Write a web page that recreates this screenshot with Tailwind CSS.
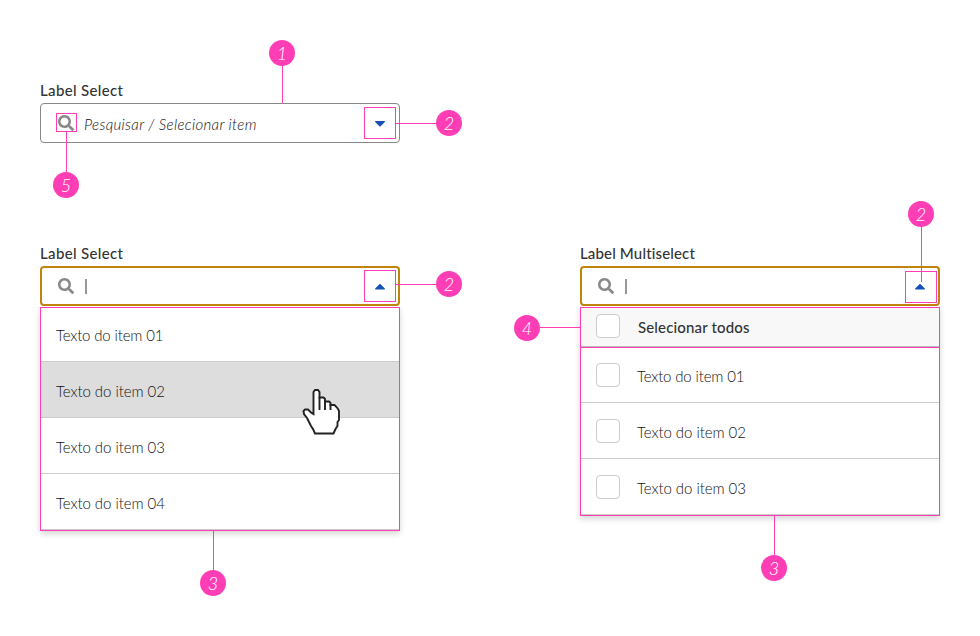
<!DOCTYPE html>
<html lang="pt-BR">
<head>
<meta charset="utf-8">
<title>Select</title>
<script src="https://cdn.jsdelivr.net/npm/@tailwindcss/browser@4"></script>
</head>
<body class="relative h-[636px] w-[980px] overflow-hidden bg-white font-[Lato,sans-serif] text-[#333]">
<svg class="hidden">
  <symbol id="search" viewBox="0 0 512 512"><path fill="#888" d="M505 442.700L405.300 343c-4.500-4.500-10.600-7-17-7H372c27.600-35.300 44-79.700 44-128C416 93.100 322.900 0 208 0S0 93.100 0 208s93.100 208 208 208c48.300 0 92.700-16.400 128-44v16.300c0 6.400 2.500 12.500 7 17l99.700 99.700c9.400 9.400 24.600 9.400 33.900 0l28.300-28.300c9.400-9.400 9.400-24.600.1-34zM208 336c-70.700 0-128-57.200-128-128 0-70.700 57.200-128 128-128 70.700 0 128 57.200 128 128 0 70.700-57.200 128-128 128z"/></symbol>
  <symbol id="down" viewBox="0 0 10 6"><path fill="#1351b4" d="M.6 0h8.800c.6 0 .8.600.4 1L5.600 5.200c-.3.400-.9.400-1.200 0L.2 1C-.2.600 0 0 .6 0z"/></symbol>
  <symbol id="up" viewBox="0 0 10 6"><path fill="#1351b4" d="M.6 5.500h8.800c.6 0 .8-.6.400-1L5.600.3c-.3-.4-.9-.4-1.200 0L.2 4.500c-.4.400-.2 1 .4 1z"/></symbol>
</svg>

<main class="flex justify-between px-10 pt-20">
  <section class="w-[360px]">
    <div class="h-[23px] text-[15px] leading-5 font-medium"><span class="tracking-[0.35px]">Label Select</span></div>
    <div class="flex h-10 items-center rounded-[4px] border border-[#888] pr-[3px] pl-[15px]">
      <div class="mb-px flex h-[19px] w-[21px] items-center border border-[#ff3eb5] pl-px"><svg class="h-4 w-4"><use href="#search"/></svg></div>
      <span class="mt-[3px] ml-[7px] flex-1 text-[15px] font-light italic tracking-[0.35px] text-[#111]">Pesquisar / Selecionar item</span>
      <div class="flex h-8 w-8 items-center justify-center border border-[#ff3eb5] pt-px"><svg class="h-[6px] w-[10px]"><use href="#down"/></svg></div>
    </div>

    <div class="mt-[100px] h-[23px] text-[15px] leading-5 font-medium"><span class="tracking-[0.35px]">Label Select</span></div>
    <div class="flex h-10 items-center rounded-[4px] border-2 border-[#c2850c] pr-[2px] pl-4">
      <svg class="h-4 w-4"><use href="#search"/></svg>
      <div class="ml-[11px] h-[15px] w-[2px] bg-[#999]"></div>
      <div class="ml-auto flex h-8 w-8 items-center justify-center border border-[#ff3eb5] pt-px"><svg class="h-[6px] w-[10px]"><use href="#up"/></svg></div>
    </div>
    <ul class="mt-px h-[224px] border border-[#ff3eb5] text-[15px] leading-5 font-light text-[#111] shadow-[0_3px_6px_rgba(0,0,0,0.16)]">
      <li class="flex h-[54px] items-center border-b border-[#ccc] pt-px pl-[15px]"><span class="tracking-[-0.15px]">Texto do item 01</span></li>
      <li class="flex h-14 items-center border-b border-[#ccc] bg-[#ddd] pt-[3px] pl-[15px]"><span class="tracking-[-0.05px]">Texto do item 02</span></li>
      <li class="flex h-14 items-center border-b border-[#ccc] pt-[3px] pl-[15px]"><span class="tracking-[-0.05px]">Texto do item 03</span></li>
      <li class="flex h-14 items-center border-b border-[#ccc] pt-[3px] pl-[15px]"><span class="tracking-[-0.05px]">Texto do item 04</span></li>
    </ul>
  </section>

  <section class="w-[360px] pt-[163px]">
    <div class="h-[23px] text-[15px] leading-5 font-medium"><span class="tracking-[0.15px]">Label Multiselect</span></div>
    <div class="flex h-10 items-center rounded-[4px] border-2 border-[#c2850c] pr-px pl-4">
      <svg class="h-4 w-4"><use href="#search"/></svg>
      <div class="ml-[11px] h-[15px] w-[2px] bg-[#999]"></div>
      <div class="mt-[2px] ml-auto flex h-8 w-8 items-center justify-center border border-[#ff3eb5] pr-[2px] pb-px"><svg class="h-[6px] w-[10px]"><use href="#up"/></svg></div>
    </div>
    <ul class="mt-px h-[209px] border border-[#ff3eb5] text-[15px] leading-5 font-light text-[#111] shadow-[0_3px_6px_rgba(0,0,0,0.16)]">
      <li class="flex h-10 items-start border-b border-[#ff3eb5] bg-[#f8f8f8] font-medium text-[#333]">
        <div class="flex h-[39px] w-full border-b border-[#bbb] pt-[6px] pl-[15px]"><i class="h-6 w-6 rounded-[4px] border border-[#ccc] bg-white"></i><span class="mt-[3px] ml-[18px] tracking-[0.15px]">Selecionar todos</span></div>
      </li>
      <li class="flex h-[55px] border-b border-[#ccc] pt-[15px] pl-[15px]"><i class="h-6 w-6 rounded-[4px] border border-[#ccc]"></i><span class="mt-[3px] ml-[17px] tracking-[-0.15px]">Texto do item 01</span></li>
      <li class="flex h-14 border-b border-[#ccc] pt-4 pl-[15px]"><i class="h-6 w-6 rounded-[4px] border border-[#ccc]"></i><span class="mt-[3px] ml-[17px] tracking-[-0.05px]">Texto do item 02</span></li>
      <li class="flex h-14 border-b border-[#ccc] pt-4 pl-[15px]"><i class="h-6 w-6 rounded-[4px] border border-[#ccc]"></i><span class="mt-[3px] ml-[17px] tracking-[-0.05px]">Texto do item 03</span></li>
    </ul>
  </section>
</main>

<!-- Annotation connectors and hand pointer -->
<svg class="pointer-events-none absolute inset-0 h-[636px] w-[980px]" viewBox="0 0 980 636" fill="none">
  <path stroke="#ff3eb5" d="M282.500 65v38M396 123.500h42M66.500 131v42M396 284.500h42M213.500 531v42M921.500 226v56M538 327.500h43M774.500 516v42"/>
  <path fill="#fff" stroke="#222" stroke-width="1.900" d="M313.500 414v-22l1.500-2h3l1.500 2v5.500h4l1.500 1.500v2.500h4l1.500 1.500v2h4l2 2 1.500 2 1 2v9l-1.500 2v4l-2 3-2 4.500H315l-2-4.500-2-3-2-4-2-4-3-4-.5-3 1.500-1.500h3l3 3z"/>
  <path stroke="#222" stroke-width="1.900" d="M319.500 397v13M325 400v10M330.500 404v6"/>
</svg>
<div class="text-center text-[18px] leading-[26px] font-light text-white italic">
  <span class="absolute top-10 left-[269px] h-[26px] w-[26px] rounded-full bg-[#ff3eb5]">1</span>
  <span class="absolute top-[110px] left-[436px] h-[26px] w-[26px] rounded-full bg-[#ff3eb5]">2</span>
  <span class="absolute top-[172px] left-[53px] h-[26px] w-[26px] rounded-full bg-[#ff3eb5]">5</span>
  <span class="absolute top-[271px] left-[436px] h-[26px] w-[26px] rounded-full bg-[#ff3eb5]">2</span>
  <span class="absolute top-[570px] left-[200px] h-[26px] w-[26px] rounded-full bg-[#ff3eb5]">3</span>
  <span class="absolute top-[201px] left-[908px] h-[26px] w-[26px] rounded-full bg-[#ff3eb5]">2</span>
  <span class="absolute top-[315px] left-[514px] h-[26px] w-[26px] rounded-full bg-[#ff3eb5]">4</span>
  <span class="absolute top-[555px] left-[761px] h-[26px] w-[26px] rounded-full bg-[#ff3eb5]">3</span>
</div>
</body>
</html>
